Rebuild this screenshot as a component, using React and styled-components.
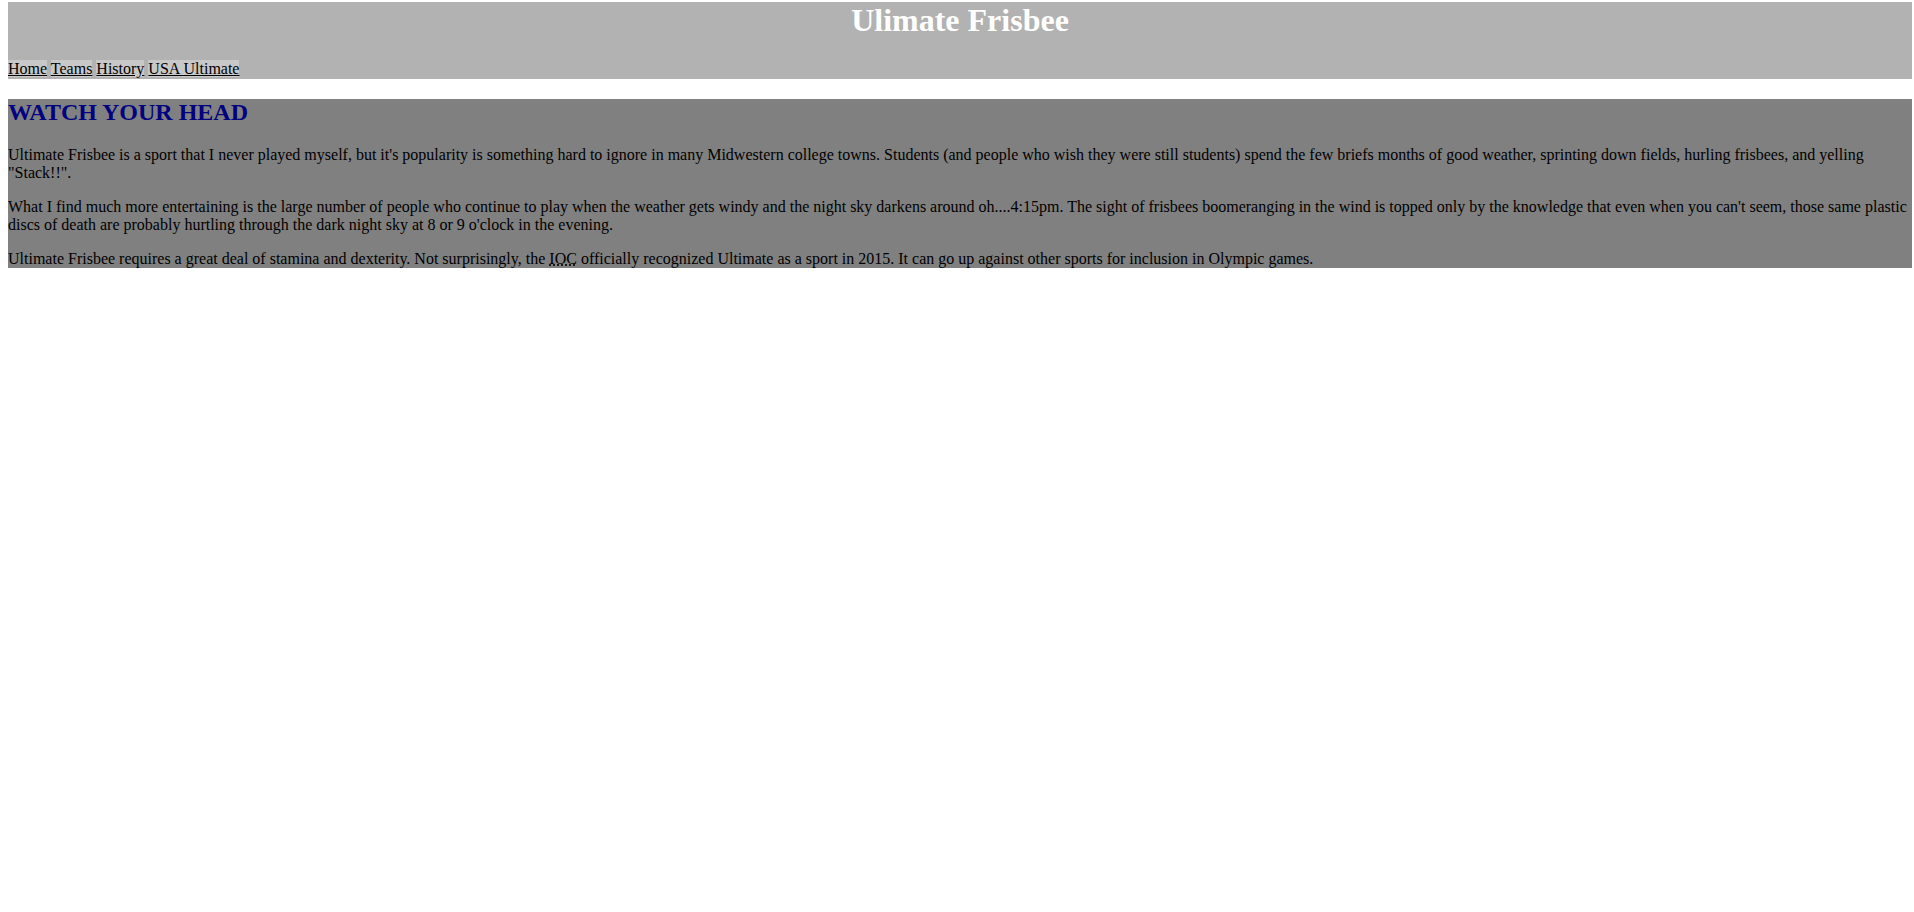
import React from 'react'
import styled, { createGlobalStyle } from 'styled-components'

const GlobalStyle = createGlobalStyle`
   body {
      margin: 2px 2px 0 8px;
      background: #fff;
      font-family: "Liberation Serif", "Times New Roman", serif;
      font-size: 16px;
      color: #000;
   }
`

const Header = styled.header`
   background: #b2b2b2;
`

const Title = styled.h1`
   margin: 0 0 21.44px;
   font-size: 32px;
   line-height: 37px;
   font-weight: bold;
   color: #fff;
   text-align: center;
`

const Nav = styled.nav`
   line-height: 18.4px;
`

const NavLink = styled.a`
   color: #000;
   background: #c8c8c8;
   text-decoration: underline;
`

const Main = styled.main`
   margin-top: 19.92px;
   background: #808080;
   display: flow-root;
`

const Heading = styled.h2`
   margin: 0 0 19.92px;
   font-size: 24px;
   line-height: 27px;
   color: #000080;
`

const Para = styled.p`
   margin: 0 0 16px;
   line-height: 18px;
   &:last-child {
      margin-bottom: 0;
   }
`

const Abbr = styled.abbr`
   text-decoration: underline dotted;
`

const links = ['Home', 'Teams', 'History', 'USA Ultimate']

export default function App() {
   return (
      <>
         <GlobalStyle />
         <Header>
            <Title>Ulimate Frisbee</Title>
            <Nav>
               {links.map((l, i) => (
                  <React.Fragment key={l}>
                     <NavLink href="#">{l}</NavLink>
                     {i < links.length - 1 && ' '}
                  </React.Fragment>
               ))}
            </Nav>
         </Header>
         <Main>
            <Heading>WATCH YOUR HEAD</Heading>
            <Para>
               Ultimate Frisbee is a sport that I never played myself, but it's popularity is something hard to
               ignore in many Midwestern college towns. Students (and people who wish they were still students) spend
               the few briefs months of good weather, sprinting down fields, hurling frisbees, and yelling "Stack!!".
            </Para>
            <Para>
               What I find much more entertaining is the large number of people who continue to play when the weather
               gets windy and the night sky darkens around oh....4:15pm. The sight of frisbees boomeranging in the wind
               is topped only by the knowledge that even when you can't seem, those same plastic discs of death are
               probably hurtling through the dark night sky at 8 or 9 o'clock in the evening.
            </Para>
            <Para>
               Ultimate Frisbee requires a great deal of stamina and dexterity. Not surprisingly, the{' '}
               <Abbr title="International Olympic Committee">IOC</Abbr> officially recognized Ultimate as a sport in
               2015. It can go up against other sports for inclusion in Olympic games.
            </Para>
         </Main>
      </>
   )
}
